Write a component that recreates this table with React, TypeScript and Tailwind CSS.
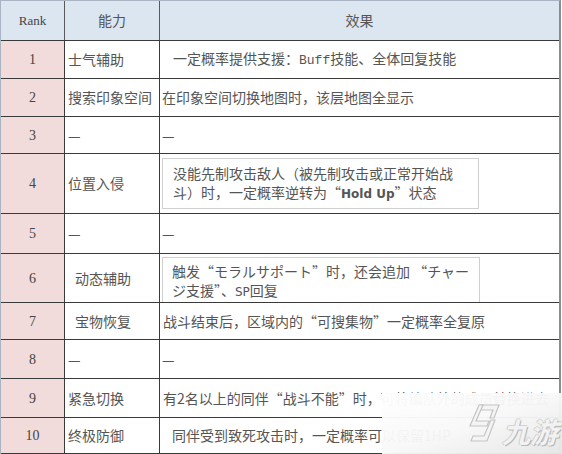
import React from "react";

const cjk = "font-['Noto_Sans_CJK_SC','Noto_Sans_CJK_JP',sans-serif]";
const serif = "font-['Liberation_Serif','Noto_Sans_CJK_SC',serif]";

function Row({
  h,
  rank,
  ability,
  indent,
  children,
}: {
  h: string;
  rank: string;
  ability: string;
  indent?: boolean;
  children: React.ReactNode;
}) {
  return (
    <div className={`flex ${h} border-b border-[#3a3a3a]`}>
      <div className={`w-[64px] shrink-0 border-r border-[#3a3a3a] bg-[#f2dcdb] flex items-center justify-center ${serif} text-[14px] text-[#444]`}>
        {rank}
      </div>
      <div className={`w-[95px] shrink-0 border-r border-[#3a3a3a] flex items-center ${indent ? "pl-[10px]" : "pl-[3px]"} ${cjk} text-[14px] text-[#555] whitespace-nowrap`}>
        {ability}
      </div>
      <div className={`flex-1 flex items-center ${cjk} text-[14px] text-[#555] whitespace-nowrap`}>
        {children}
      </div>
    </div>
  );
}

export default function App() {
  return (
    <div className="w-[562px] h-[454px] bg-white relative overflow-hidden">
      <div className="w-[561px] border-t border-l border-[#a9b4c2] border-r-2 border-r-[#8c8c8c]">
        {/* header */}
        <div className="flex h-[40px] border-b border-[#3a3a3a] bg-[#dce6f1]">
          <div className={`w-[64px] shrink-0 border-r border-[#5a5a5a] flex items-center justify-center ${serif} text-[13px] text-[#444]`}>
            Rank
          </div>
          <div className={`w-[95px] shrink-0 border-r border-[#5a5a5a] flex items-center justify-center ${cjk} text-[14px] text-[#555]`}>
            能力
          </div>
          <div className={`flex-1 flex items-center justify-center ${cjk} text-[14px] text-[#555]`}>
            效果
          </div>
        </div>

        <Row h="h-[38px]" rank="1" ability="士气辅助">
          <span className="pl-[13px]">
            一定概率提供支援：<span className="font-['Liberation_Mono',monospace] text-[13px]">Buff</span>技能、全体回复技能
          </span>
        </Row>
        <Row h="h-[38px]" rank="2" ability="搜索印象空间">
          <span className="pl-[2px]">在印象空间切换地图时，该层地图全显示</span>
        </Row>
        <Row h="h-[37px]" rank="3" ability="—">
          <span className="pl-[2px]">—</span>
        </Row>
        <Row h="h-[60px]" rank="4" ability="位置入侵">
          <div className="ml-[2px] w-[317px] h-[51px] border border-[#d0d0d0] pl-[10px] pt-[5px] leading-[19px]">
            没能先制攻击敌人（被先制攻击或正常开始战
            <br />
            斗）时，一定概率逆转为“<span className="font-['DejaVu_Sans',sans-serif] font-bold text-[12px] text-[#555]">Hold Up</span>”状态
          </div>
        </Row>
        <Row h="h-[40px]" rank="5" ability="—">
          <span className="pl-[2px]">—</span>
        </Row>
        <Row h="h-[49px]" rank="6" ability="动态辅助" indent>
          <div className="ml-[2px] mt-[3px] self-stretch w-[318px] border border-[#d0d0d0] border-b-0 pl-[9px] pt-[4px] leading-[19px]">
            触发“モラルサポート”时，还会追加 “チャー
            <br />
            ジ支援”、<span className="font-['DejaVu_Sans',sans-serif] text-[12px]">SP</span>回复
          </div>
        </Row>
        <Row h="h-[37px]" rank="7" ability="宝物恢复" indent>
          <span className="pl-[3px]">战斗结束后，区域内的“可搜集物”一定概率全复原</span>
        </Row>
        <Row h="h-[39px]" rank="8" ability="—">
          <span className="pl-[2px]">—</span>
        </Row>
        <Row h="h-[39px]" rank="9" ability="紧急切换">
          <span className="pl-[3px]">有2名以上的同伴“战斗不能”时，可将编队外的成员替换进去</span>
        </Row>
        <Row h="h-[36px]" rank="10" ability="终极防御">
          <span className="pl-[12px]">同伴受到致死攻击时，一定概率可以保留1HP</span>
        </Row>
      </div>

      {/* watermark overlay */}
      <div className="absolute left-[382px] top-[393px] w-[180px] h-[61px] bg-gradient-to-br from-white/[0.97] via-[#f8f8f8]/[0.96] to-[#e6e6e6]/[0.97] flex items-center justify-end pr-[4px]">
        <svg width="34" height="42" viewBox="0 0 34 42" className="mr-[1px] mb-[2px]">
          <g fill="#f4f4f4" stroke="#c4c4c4" strokeWidth="1.2" strokeLinejoin="miter">
            <path d="M13 3 L32 3 L27 16 L23 16 L26 8 L15 8 Z" />
            <path d="M12 3 L16 3 L9 19 L22 19 L20 24 L3 24 Z" />
            <path d="M24 18 L28 18 L20 39 L4 39 L6 34 L17 34 Z" />
          </g>
        </svg>
        <span className={`${cjk} italic font-bold text-[28px] leading-none text-[#f2f2f2] mt-[14px] [text-shadow:1px_1px_0_#b8b8b8,-1px_0_0_#cfcfcf,0_-1px_0_#d4d4d4]`}>
          九游
        </span>
      </div>
    </div>
  );
}
